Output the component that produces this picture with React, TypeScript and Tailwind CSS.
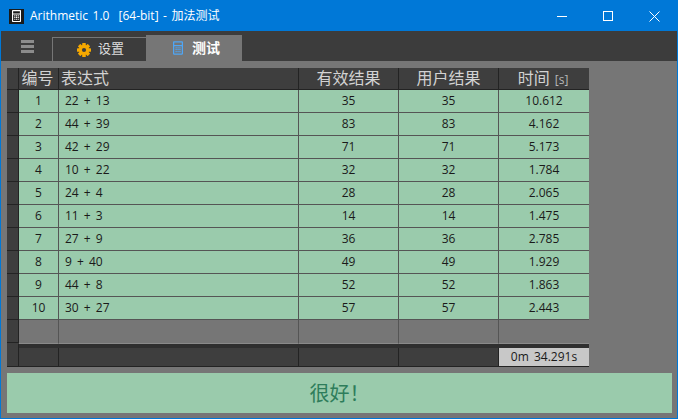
import React from 'react';

const rows = [
  ['1', '22 + 13', '35', '35', '10.612'],
  ['2', '44 + 39', '83', '83', '4.162'],
  ['3', '42 + 29', '71', '71', '5.173'],
  ['4', '10 + 22', '32', '32', '1.784'],
  ['5', '24 + 4', '28', '28', '2.065'],
  ['6', '11 + 3', '14', '14', '1.475'],
  ['7', '27 + 9', '36', '36', '2.785'],
  ['8', '9 + 40', '49', '49', '1.929'],
  ['9', '44 + 8', '52', '52', '1.863'],
  ['10', '30 + 27', '57', '57', '2.443'],
];

const columns = 'grid grid-cols-[12px_40px_240px_100px_100px_90px]';

const CalcIcon = ({ className }: { className: string }) => (
  <svg viewBox="0 0 12 16" className={className} fill="currentColor">
    <path d="M1 0h10a1 1 0 0 1 1 1v14a1 1 0 0 1-1 1H1a1 1 0 0 1-1-1V1a1 1 0 0 1 1-1zm.5 1.5v3h9v-3zm0 4.5v8.5h9V6z" fillRule="evenodd" />
    <path d="M3 7h1.5v1.5H3zM5.3 7h1.5v1.5H5.3zM7.6 7h1.5v1.5H7.6zM3 9.3h1.5v1.5H3zM5.3 9.3h1.5v1.5H5.3zM7.6 9.3h1.5v1.5H7.6zM3 11.6h1.5v1.5H3zM5.3 11.6h1.5v1.5H5.3zM7.6 11.6h1.5v1.5H7.6z" />
  </svg>
);

const GearIcon = () => (
  <svg viewBox="0 0 14 14" className="w-[14px] h-[14px] text-[#f5a800]" fill="currentColor">
    {[0, 45, 90, 135].map((deg) => (
      <rect key={deg} x="5.2" y="0" width="3.6" height="14" rx="0.6" transform={`rotate(${deg} 7 7)`} />
    ))}
    <circle cx="7" cy="7" r="5" />
    <circle cx="7" cy="7" r="2.1" fill="#3c3c3c" />
  </svg>
);

const HeaderCell = ({ children, className = '' }: { children?: React.ReactNode; className?: string }) => (
  <div className={`border-r border-[#232323] h-[21px] leading-[20px] text-[16px] text-[#d2d2d2] ${className}`}>{children}</div>
);

const App = () => {
  return (
    <div
      className="w-[678px] h-[419px] flex flex-col overflow-hidden bg-[#767676] border border-[#0078d7] text-[12px]"
      style={{ fontFamily: '"Open Sans", "Noto Sans CJK SC", sans-serif' }}
    >
      {/* Title bar */}
      <div className="h-[30px] shrink-0 bg-[#0078d7] flex items-center text-white">
        <div className="w-[15px] h-[15px] ml-[8px] bg-[#1a1a1a] flex items-center justify-center">
          <CalcIcon className="w-[9px] h-[12px] text-white" />
        </div>
        <span className="ml-[6px] text-[12px] whitespace-pre [word-spacing:1.4px]">Arithmetic 1.0  [64-bit] - 加法测试</span>
        <div className="ml-auto flex items-center">
          <div className="w-[46px] h-[30px] flex items-center justify-center">
            <svg width="10" height="10" viewBox="0 0 10 10" stroke="currentColor" fill="none">
              <path d="M0 5.5h10" />
            </svg>
          </div>
          <div className="w-[46px] h-[30px] flex items-center justify-center">
            <svg width="10" height="10" viewBox="0 0 10 10" stroke="currentColor" fill="none">
              <rect x="0.5" y="0.5" width="9" height="9" />
            </svg>
          </div>
          <div className="w-[46px] h-[30px] flex items-center justify-center">
            <svg width="11" height="11" viewBox="0 0 11 11" stroke="currentColor" fill="none">
              <path d="M0.5 0.5l10 10M10.5 0.5l-10 10" />
            </svg>
          </div>
        </div>
      </div>

      {/* Tabs */}
      <div className="h-[30px] shrink-0 bg-[#3c3c3c] flex items-end">
        <div className="w-[51px] h-[30px] flex flex-col items-center justify-center gap-[2px] pl-[1px]">
          <div className="w-[13px] h-[3px] bg-[#8c8c8c]" />
          <div className="w-[13px] h-[3px] bg-[#8c8c8c]" />
          <div className="w-[13px] h-[3px] bg-[#8c8c8c]" />
        </div>
        <div className="w-[94px] h-[24px] border-t border-l border-[#767676] flex items-center pl-[24px] gap-[7px] text-[13px] text-[#dcdcdc]">
          <GearIcon />
          <span className="-mt-[2px]">设置</span>
        </div>
        <div className="w-[96px] h-[26px] bg-[#767676] flex items-center pl-[27px] gap-[9px] text-[14px] font-bold text-white">
          <CalcIcon className="w-[10px] h-[14px] text-[#4fa6f5]" />
          <span className="-mt-[2px]">测试</span>
        </div>
      </div>

      {/* Results table */}
      <div className="flex-1 flex flex-col px-[6px] pt-[7px] pb-[5px]">
        <div className="w-[582px] bg-[#3e3e3e]">
          <div className={`${columns} border-b border-[#232323]`}>
            <HeaderCell />
            <HeaderCell className="text-center pr-[2px]">编号</HeaderCell>
            <HeaderCell className="pl-[2px]">表达式</HeaderCell>
            <HeaderCell className="text-center">有效结果</HeaderCell>
            <HeaderCell className="text-center">用户结果</HeaderCell>
            <div className="h-[21px] leading-[20px] text-[16px] text-[#d2d2d2] text-center pr-[2px] [word-spacing:1px]">
              时间 <span className="text-[12px] text-[#b8b8b8]">[s]</span>
            </div>
          </div>

          {rows.map(([no, expr, valid, user, time]) => (
            <div key={no} className={`${columns} h-[23px] leading-[22px] text-[#1a1a1a]`}>
              <div className="border-r border-b border-[#232323]" />
              <div className="bg-[#9acbac] border-r border-b border-[#555555] text-center">{no}</div>
              <div className="bg-[#9acbac] border-r border-b border-[#555555] pl-[6px] [word-spacing:2px]">{expr}</div>
              <div className="bg-[#9acbac] border-r border-b border-[#555555] text-center">{valid}</div>
              <div className="bg-[#9acbac] border-r border-b border-[#555555] text-center">{user}</div>
              <div className="bg-[#9acbac] border-b border-[#555555] text-center">{time}</div>
            </div>
          ))}

          {/* Empty row */}
          <div className={`${columns} h-[24px]`}>
            <div className="border-r border-[#232323] h-[23px] border-b" />
            <div className="bg-[#767676] border-r border-b border-[#8a8a8a] border-r-[#555555]" />
            <div className="bg-[#767676] border-r border-b border-[#8a8a8a] border-r-[#555555]" />
            <div className="bg-[#767676] border-r border-b border-[#8a8a8a] border-r-[#555555]" />
            <div className="bg-[#767676] border-r border-b border-[#8a8a8a] border-r-[#555555]" />
            <div className="bg-[#767676] border-b border-[#8a8a8a]" />
          </div>

          {/* Footer */}
          <div className="grid grid-cols-[12px_570px] h-[4px]">
            <div className="border-r border-[#232323]" />
            <div className="bg-[#2f2f2f]" />
          </div>
          <div className={`${columns} h-[19px] border-b border-[#232323]`}>
            <div className="border-r border-[#232323]" />
            <div className="border-r border-[#232323]" />
            <div className="border-r border-[#232323]" />
            <div className="border-r border-[#232323]" />
            <div className="border-r border-[#232323]" />
            <div className="bg-[#c8c8c8] text-[#1a1a1a] text-center leading-[18px] [word-spacing:2px]">0m 34.291s</div>
          </div>
        </div>

        {/* Result message */}
        <div className="mt-[6px] h-[40px] w-[665px] bg-[#9acbac] flex items-center justify-center pt-[1px] text-[20px] text-[#2e7d5b]">
          很好！
        </div>
      </div>
    </div>
  );
};

export default App;
